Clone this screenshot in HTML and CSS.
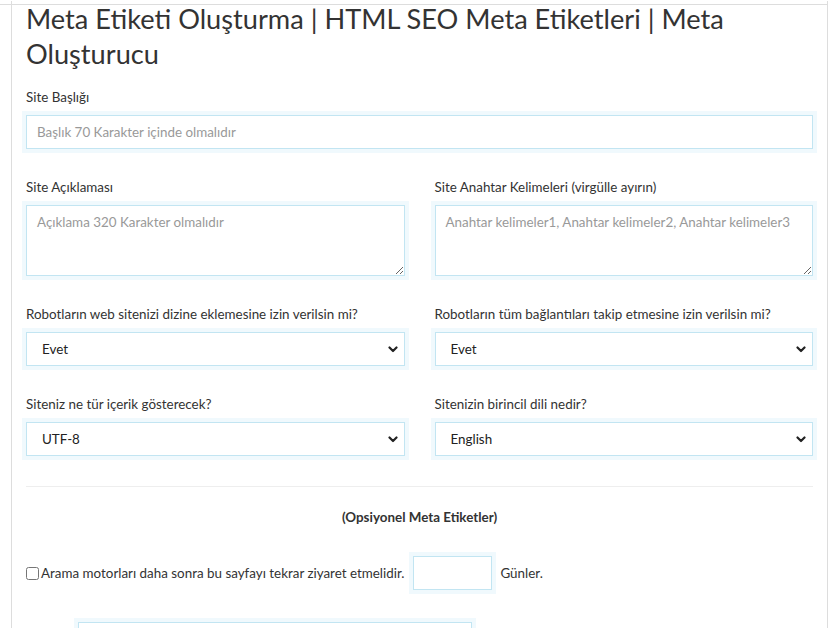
FILE: index.html
```html
<!DOCTYPE html>
<html lang="tr">
<head>
<meta charset="utf-8">
<title>Meta Etiketi Oluşturma</title>
<link rel="stylesheet" href="styles.css">
</head>
<body>
<div class="topline"></div>
<div class="panel">
  <h1 class="title">Meta Etiketi Oluşturma | HTML SEO Meta Etiketleri | Meta Oluşturucu</h1>

  <div class="group">
    <label class="label">Site Başlığı</label>
    <input class="control" type="text" placeholder="Başlık 70 Karakter içinde olmalıdır">
  </div>

  <div class="row">
    <div class="group">
      <label class="label">Site Açıklaması</label>
      <textarea class="control area" placeholder="Açıklama 320 Karakter olmalıdır"></textarea>
    </div>
    <div class="group">
      <label class="label">Site Anahtar Kelimeleri (virgülle ayırın)</label>
      <textarea class="control area" placeholder="Anahtar kelimeler1, Anahtar kelimeler2, Anahtar kelimeler3"></textarea>
    </div>
  </div>

  <div class="row">
    <div class="group">
      <label class="label">Robotların web sitenizi dizine eklemesine izin verilsin mi?</label>
      <div class="select-wrap">
        <select class="control select"><option>Evet</option><option>Hayır</option></select>
        <svg class="chev" width="10" height="7" viewBox="0 0 10 7"><path d="M1.5 1.5 L5 5 L8.5 1.5" fill="none" stroke="#222" stroke-width="2.2" stroke-linecap="round" stroke-linejoin="round"/></svg>
      </div>
    </div>
    <div class="group">
      <label class="label">Robotların tüm bağlantıları takip etmesine izin verilsin mi?</label>
      <div class="select-wrap">
        <select class="control select"><option>Evet</option><option>Hayır</option></select>
        <svg class="chev" width="10" height="7" viewBox="0 0 10 7"><path d="M1.5 1.5 L5 5 L8.5 1.5" fill="none" stroke="#222" stroke-width="2.2" stroke-linecap="round" stroke-linejoin="round"/></svg>
      </div>
    </div>
  </div>

  <div class="row">
    <div class="group">
      <label class="label">Siteniz ne tür içerik gösterecek?</label>
      <div class="select-wrap">
        <select class="control select"><option>UTF-8</option><option>ISO-8859-1</option></select>
        <svg class="chev" width="10" height="7" viewBox="0 0 10 7"><path d="M1.5 1.5 L5 5 L8.5 1.5" fill="none" stroke="#222" stroke-width="2.2" stroke-linecap="round" stroke-linejoin="round"/></svg>
      </div>
    </div>
    <div class="group">
      <label class="label">Sitenizin birincil dili nedir?</label>
      <div class="select-wrap">
        <select class="control select"><option>English</option><option>Türkçe</option></select>
        <svg class="chev" width="10" height="7" viewBox="0 0 10 7"><path d="M1.5 1.5 L5 5 L8.5 1.5" fill="none" stroke="#222" stroke-width="2.2" stroke-linecap="round" stroke-linejoin="round"/></svg>
      </div>
    </div>
  </div>

  <hr class="divider">

  <p class="optional">(Opsiyonel Meta Etiketler)</p>

  <div class="revisit">
    <input class="check" type="checkbox">
    <span class="revisit-text">Arama motorları daha sonra bu sayfayı tekrar ziyaret etmelidir.</span>
    <input class="control small" type="text">
    <span class="revisit-text">Günler.</span>
  </div>

  <div class="next">
    <input class="control wide" type="text">
  </div>
</div>
</body>
</html>
```

FILE: styles.css
```css
html, body {
  margin: 0;
  padding: 0;
  background: #fff;
}

body {
  font-family: Lato, "Noto Sans", sans-serif;
  color: #333;
  overflow: hidden;
}

.topline {
  margin: 4px 8px 0 0;
  border-top: 1px solid #ddd;
}

.panel {
  margin: 0 8px 0 11px;
  border-left: 1px solid #ddd;
  border-right: 1px solid #ddd;
  padding: 0 14px;
  min-height: 700px;
}

.title {
  margin: -4px 0 16px;
  font-size: 27.2px;
  line-height: 35px;
  font-weight: 400;
  color: #333;
}

.group {
  margin-bottom: 28px;
}

.label {
  display: block;
  font-size: 13.4px;
  line-height: 20px;
  margin-bottom: 8px;
  color: #333;
}

.row {
  display: grid;
  grid-template-columns: 1fr 1fr;
  column-gap: 30px;
}

.control {
  display: block;
  width: 100%;
  box-sizing: border-box;
  height: 34px;
  margin: 0;
  padding: 0 10px;
  border: 1px solid #c2e5f2;
  border-radius: 0;
  box-shadow: 0 0 0 4px #f0f9fd;
  background: #fff;
  font-family: Lato, "Noto Sans", sans-serif;
  font-size: 13.4px;
  color: #222;
  outline: none;
}

.control::placeholder {
  color: #999;
}

.area {
  height: 71px;
  padding: 6px 6px 6px 10px;
  line-height: 20px;
  resize: vertical;
}

.select-wrap {
  position: relative;
}

.select {
  appearance: none;
  -webkit-appearance: none;
  padding-left: 15px;
}

.chev {
  position: absolute;
  right: 7px;
  top: 14px;
  pointer-events: none;
}

.divider {
  margin: 2px 0 20px;
  border: 0;
  border-top: 1px solid #eee;
}

.optional {
  margin: 0 0 29px;
  text-align: center;
  font-size: 13.4px;
  line-height: 20px;
  font-weight: 700;
}

.revisit {
  display: flex;
  align-items: center;
  font-size: 13.4px;
}

.check {
  width: 13px;
  height: 13px;
  margin: 0 2px 0 0;
}

.small {
  width: 79px;
  margin: 0 8px 0 9px;
}

.next {
  display: flex;
  margin-top: 32px;
  padding-left: 52px;
}

.wide {
  width: 394px;
}
```
